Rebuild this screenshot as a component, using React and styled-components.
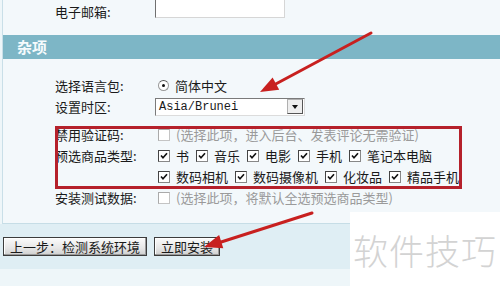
import React from 'react';
import styled, { createGlobalStyle } from 'styled-components';

const Global = createGlobalStyle`
  html, body { margin: 0; padding: 0; }
  body { background: #eef6f9; }
`

const Page = styled.div`
  position: relative;
  width: 500px;
  height: 286px;
  overflow: hidden;
  background: #eef6f9;
  font-family: "Noto Sans CJK SC", "Liberation Sans", sans-serif;
  font-size: 13px;
  color: #1a1a1a;
`

const Panel = styled.div`
  margin-left: 2px;
  border-left: 1px solid #c9dfe8;
  border-bottom: 1px solid #c6dde6;
  background: #f3f8fb;
`

const TopRow = styled.div`
  height: 35px;
  display: grid;
  grid-template-columns: 100px auto;
  align-items: start;
  padding-left: 52px;
`

const Label = styled.span`
  line-height: 21px;
  white-space: nowrap;
  margin-top: ${p => p.offset || 0}px;
`

const TextInput = styled.div`
  width: 128px;
  height: 19px;
  margin-top: -3px;
  background: #fff;
  border: 1px solid #d6d6d6;
  border-top-color: #707070;
  border-left-color: #707070;
`

const Header = styled.div`
  height: 24px;
  line-height: 24px;
  padding-left: 14px;
  background: #7db6c6;
  color: #f6fbfd;
  font-size: 15px;
  font-weight: bold;
`

const Form = styled.div`
  padding: 16px 0 15px 52px;
`

const Row = styled.div`
  display: grid;
  grid-template-columns: 100px auto;
  align-items: ${p => (p.top ? 'start' : 'center')};
  min-height: 21px;
  margin-top: ${p => p.gap || 0}px;
`

const Field = styled.div`
  display: flex;
  align-items: center;
  padding-left: 3px;
`

const Hint = styled.span`
  color: #9a9a9a;
  white-space: nowrap;
`

const Radio = styled.span`
  width: 9px;
  height: 9px;
  border-radius: 50%;
  border: 1px solid #9a9a9a;
  border-top-color: #555;
  background: #fff;
  margin-right: 6px;
  display: flex;
  align-items: center;
  justify-content: center;
  &::after {
    content: '';
    width: 3px;
    height: 3px;
    border-radius: 50%;
    background: #111;
  }
`

const Select = styled.div`
  width: 145px;
  height: 16px;
  margin-left: -3px;
  display: flex;
  align-items: center;
  justify-content: space-between;
  background: #fff;
  border: 1px solid #dcdcdc;
  border-top-color: #7a7a7a;
  border-left-color: #7a7a7a;
  font-family: "Liberation Mono", monospace;
  font-size: 12px;
  padding-left: 3px;
`

const DropButton = styled.span`
  width: 14px;
  height: 13px;
  margin-right: 1px;
  background: #eeeeee;
  border: 1px solid #b0b0b0;
  border-right-color: #555;
  border-bottom-color: #555;
  display: flex;
  align-items: center;
  justify-content: center;
  &::after {
    content: '';
    border-left: 3px solid transparent;
    border-right: 3px solid transparent;
    border-top: 4px solid #111;
  }
`

const Box = styled.span`
  width: 10px;
  height: 10px;
  flex: none;
  background: #fff;
  border: 1px solid ${p => (p.checked ? '#888' : '#c4c4c4')};
  border-top-color: ${p => (p.checked ? '#444' : '#aaa')};
  border-left-color: ${p => (p.checked ? '#444' : '#aaa')};
  margin-right: 6px;
  display: flex;
  align-items: center;
  justify-content: center;
`

const Highlight = styled.div`
  position: relative;
  &::before {
    content: '';
    position: absolute;
    left: 0;
    top: 2px;
    width: 401px;
    bottom: -2px;
    border: 3px solid #b5212b;
    pointer-events: none;
  }
`

const Options = styled.div`
  display: flex;
  flex-wrap: wrap;
  width: 310px;
  padding-left: 3px;
`

const Option = styled.span`
  display: flex;
  align-items: center;
  height: 21px;
  margin-right: 7px;
  white-space: nowrap;
`

const Footer = styled.div`
  height: 45px;
  display: flex;
  align-items: center;
  gap: 7px;
  padding-left: 3px;
  background: #dfeef4;
`

const Button = styled.button`
  height: 19px;
  padding: 0 6px;
  font-family: "Noto Sans CJK SC", sans-serif;
  font-size: 13px;
  line-height: 15px;
  color: #1a1a1a;
  border: 1px solid #3c3c3c;
  background: linear-gradient(#fbfbfb, #e6e6e6 60%, #cfcfcf);
  box-shadow: inset -1px -1px 0 #9a9a9a, inset 1px 1px 0 #fff;
`

const Watermark = styled.div`
  position: absolute;
  right: 0;
  bottom: 0;
  width: 150px;
  height: 74px;
  background: #fff;
  color: #d3d3d3;
  font-size: 35px;
  font-weight: 300;
  letter-spacing: 1px;
  display: flex;
  align-items: center;
  justify-content: center;
`

const Annotations = styled.svg`
  position: absolute;
  left: 0;
  top: 0;
  pointer-events: none;
`

const Check = () => (
  <svg width="8" height="8" viewBox="0 0 8 8">
    <path d="M1 3.5 L3 5.8 L7 1.2" fill="none" stroke="#111" strokeWidth="1.6" />
  </svg>
)

const goods = ['书', '音乐', '电影', '手机', '笔记本电脑', '数码相机', '数码摄像机', '化妆品', '精品手机']

export default function App() {
  return (
    <Page>
      <Global />
      <Panel>
        <TopRow>
          <Label offset={1}>电子邮箱:</Label>
          <TextInput />
        </TopRow>
        <Header>杂项</Header>
        <Form>
          <Row>
            <Label>选择语言包:</Label>
            <Field>
              <Radio />
              <span>简体中文</span>
            </Field>
          </Row>
          <Row>
            <Label>设置时区:</Label>
            <Field>
              <Select>
                Asia/Brunei
                <DropButton />
              </Select>
            </Field>
          </Row>
          <Highlight>
            <Row gap={7}>
              <Label>禁用验证码:</Label>
              <Field>
                <Box />
                <Hint>(选择此项，进入后台、发表评论无需验证)</Hint>
              </Field>
            </Row>
            <Row top>
              <Label>预选商品类型:</Label>
              <Options>
                {goods.map(g => (
                  <Option key={g}>
                    <Box checked><Check /></Box>
                    {g}
                  </Option>
                ))}
              </Options>
            </Row>
          </Highlight>
          <Row>
            <Label>安装测试数据:</Label>
            <Field>
              <Box />
              <Hint>(选择此项，将默认全选预选商品类型)</Hint>
            </Field>
          </Row>
        </Form>
      </Panel>
      <Footer>
        <Button>上一步：检测系统环境</Button>
        <Button>立即安装</Button>
      </Footer>
      <Watermark>软件技巧</Watermark>
      <Annotations width="500" height="286">
        <g stroke="#c8201f" strokeWidth="3" strokeLinecap="round">
          <line x1="371" y1="33" x2="272" y2="86" />
          <line x1="312" y1="213" x2="218" y2="243" />
        </g>
        <g fill="#c8201f">
          <polygon points="260,92 272.6,77.4 279.2,89.8" />
          <polygon points="204,247 219.1,234.9 223.3,248.3" />
        </g>
      </Annotations>
    </Page>
  )
}
